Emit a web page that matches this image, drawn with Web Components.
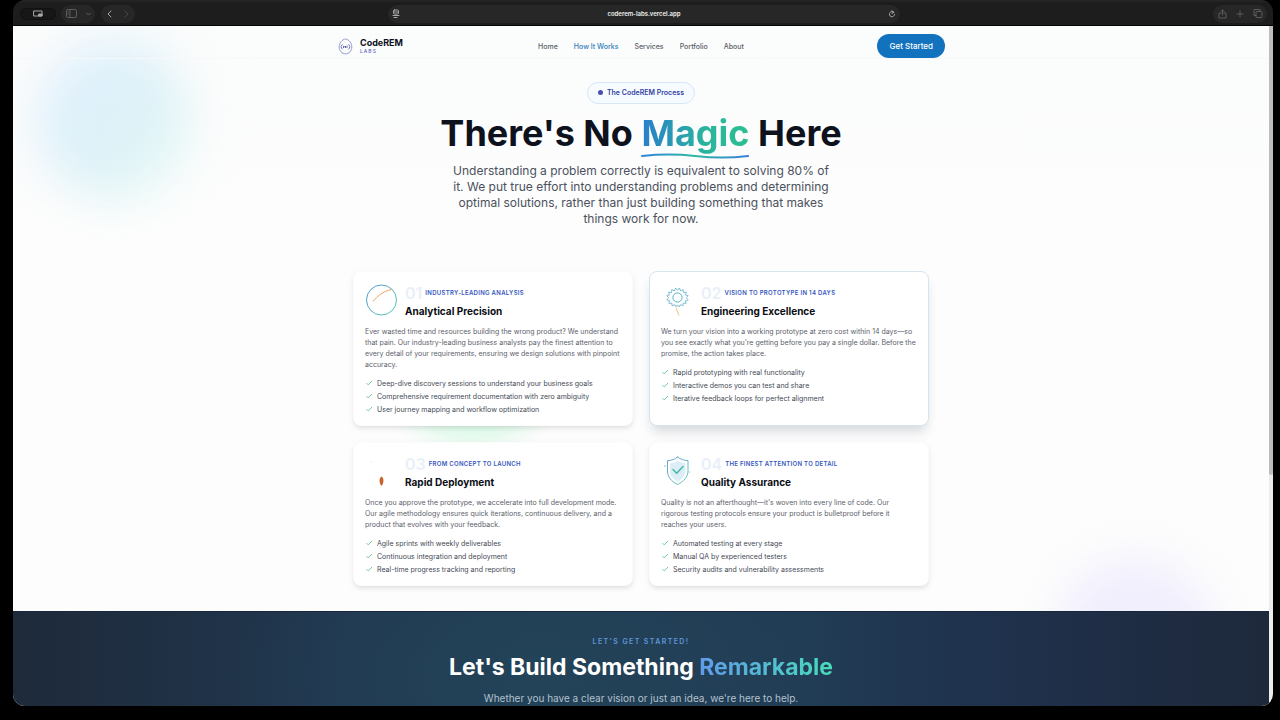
<!DOCTYPE html>
<html lang="en">
<head>
<meta charset="utf-8">
<meta name="viewport" content="width=device-width, initial-scale=1">
<title>CodeREM Labs – How It Works</title>
<style>
  html, body { height: 100%; }
  body { margin: 0; background: #000; font-family: Inter, "Liberation Sans", sans-serif; color: #0b0f1a; overflow: hidden; }
</style>
</head>
<body>
<browser-window address="coderem-labs.vercel.app">
  <site-header></site-header>
  <hero-section>
    <span slot="badge">The CodeREM Process</span>
    Understanding a problem correctly is equivalent to solving 80% of it. We put true effort into understanding problems and determining optimal solutions, rather than just building something that makes things work for now.
  </hero-section>
  <process-grid>
    <process-card number="01" tag="Industry-Leading Analysis" heading="Analytical Precision">
      <svg slot="icon" viewBox="0 0 32 32" width="32" height="32" fill="none" aria-hidden="true">
        <defs><linearGradient id="ring" x1="0" y1="0" x2="1" y2="1"><stop stop-color="#3f86cf"/><stop offset="1" stop-color="#3cc7a4"/></linearGradient></defs>
        <circle cx="16.500" cy="16" r="15" stroke="url(#ring)" stroke-width=".9"/>
        <path d="M8 17.500C12 12.500 17.500 7.500 26.500 5.500" stroke="#efa25f" stroke-width="1"/>
      </svg>
      Ever wasted time and resources building the wrong product? We understand that pain. Our industry-leading business analysts pay the finest attention to every detail of your requirements, ensuring we design solutions with pinpoint accuracy.
      <check-item slot="item">Deep-dive discovery sessions to understand your business goals</check-item>
      <check-item slot="item">Comprehensive requirement documentation with zero ambiguity</check-item>
      <check-item slot="item">User journey mapping and workflow optimization</check-item>
    </process-card>
    <process-card number="02" tag="Vision to Prototype in 14 Days" heading="Engineering Excellence" active>
      <svg slot="icon" viewBox="0 0 32 32" width="32" height="32" fill="none" stroke-linejoin="round" aria-hidden="true">
        <path d="M16.500 6.300L18.500 4l1 2.900 2.700-1.300.2 2.900 3-.3-.9 2.700 2.700.8-1.900 2 1.900 2.200-2.800.8.800 2.600-3-.1-.3 2.600-2.600-1.100-1.200 2.200-1.600-2-1.600 2-1.200-2.200-2.600 1.100-.3-2.600-3 .1.800-2.600-2.800-.8 1.900-2.200-1.900-2 2.700-.8-.9-2.700 3 .3.2-2.900 2.700 1.300 1-2.900z" stroke="#5cb0c8" stroke-width=".8"/>
        <circle cx="16.500" cy="13.500" r="4.600" stroke="#45aabc" stroke-width=".9"/>
        <path d="M15 24l3 7.500" stroke="#e6c67c" stroke-width="1"/>
      </svg>
      We turn your vision into a working prototype at zero cost within 14 days—so you see exactly what you're getting before you pay a single dollar. Before the promise, the action takes place.
      <check-item slot="item">Rapid prototyping with real functionality</check-item>
      <check-item slot="item">Interactive demos you can test and share</check-item>
      <check-item slot="item">Iterative feedback loops for perfect alignment</check-item>
    </process-card>
    <process-card number="03" tag="From Concept to Launch" heading="Rapid Deployment">
      <svg slot="icon" viewBox="0 0 32 32" width="32" height="32" aria-hidden="true">
        <path d="M16.500 21.500c2.600 1.600 2.600 6.500 0 9.500-2.600-3-2.600-7.900 0-9.500z" fill="#c9622b"/>
        <circle cx="6" cy="7" r=".5" fill="#c5d8e8"/>
      </svg>
      Once you approve the prototype, we accelerate into full development mode. Our agile methodology ensures quick iterations, continuous delivery, and a product that evolves with your feedback.
      <check-item slot="item">Agile sprints with weekly deliverables</check-item>
      <check-item slot="item">Continuous integration and deployment</check-item>
      <check-item slot="item">Real-time progress tracking and reporting</check-item>
    </process-card>
    <process-card number="04" tag="The Finest Attention to Detail" heading="Quality Assurance">
      <svg slot="icon" viewBox="0 0 32 32" width="32" height="32" fill="none" stroke-linecap="round" stroke-linejoin="round" aria-hidden="true">
        <defs><linearGradient id="sh" x1="0" y1="0" x2="1" y2="1"><stop stop-color="#5b93cf"/><stop offset="1" stop-color="#52c2a8"/></linearGradient></defs>
        <path d="M16.500 2c3 2.400 6.500 3.500 10.500 3.600V16c0 6-4.500 10.500-10.500 13.500C10.500 26.500 6.500 22 6.500 16V5.600c4-.1 7.500-1.200 10-3.600z" stroke="url(#sh)" stroke-width=".9"/>
        <path d="M16.700 5.500c2.400 1.800 5 2.600 7.800 2.700V16c0 4.500-3.300 8-7.800 10.500C12.200 24 9 20.500 9 16V8.200c2.800-.1 5.400-.9 7.700-2.700z" fill="#dcedf8"/>
        <path d="M12 14.500l3.700 3.700 6.300-6.700" stroke="#43b9a0" stroke-width="1.500"/>
        <circle cx="4" cy="11" r=".9" fill="#a9cfe4"/><circle cx="28.500" cy="17" r=".8" fill="#a4dccc"/>
      </svg>
      Quality is not an afterthought—it's woven into every line of code. Our rigorous testing protocols ensure your product is bulletproof before it reaches your users.
      <check-item slot="item">Automated testing at every stage</check-item>
      <check-item slot="item">Manual QA by experienced testers</check-item>
      <check-item slot="item">Security audits and vulnerability assessments</check-item>
    </process-card>
  </process-grid>
  <cta-section>
    <span slot="eyebrow">Let's get started!</span>
    Whether you have a clear vision or just an idea, we're here to help.
  </cta-section>
</browser-window>

<script>
const define = (name, html) => customElements.define(name, class extends HTMLElement {
  constructor() {
    super();
    const t = document.createElement('template');
    t.innerHTML = html;
    this.attachShadow({ mode: 'open' }).append(t.content.cloneNode(true));
  }
  connectedCallback() {
    this.shadowRoot.querySelectorAll('[data-attr]').forEach(n => {
      const v = this.getAttribute(n.dataset.attr) || '';
      if (n.localName === 'input') n.value = v; else n.textContent = v;
    });
  }
});

define('browser-window', `
<style>
  :host { display: block; height: 100vh; box-sizing: border-box; padding: 0 7px 14px 13px; }
  .frame { display: flex; flex-direction: column; height: 100%; border-radius: 12px; overflow: hidden; background: #1d1d1d; }
  .bar { display: grid; grid-template-columns: 1fr minmax(0, 512px) 1fr; align-items: center; height: 26px; flex: none; box-sizing: border-box; border-top: 2px solid #242424; border-bottom: 1px solid #050505; padding: 0 6px 0 8px; }
  .group { display: flex; gap: 6px; align-items: center; }
  .end { justify-content: flex-end; }
  .pill { display: flex; align-items: center; justify-content: space-around; height: 18px; width: 34px; border-radius: 9px; background: #272727; }
  .pill.dark { background: #171717; height: 10px; box-shadow: 0 0 0 1px #111; }
  .pill.wide { width: 54px; }
  button { display: grid; place-items: center; padding: 0; border: 0; background: none; color: #5c5c5c; }
  button.lit { color: #a8a8a8; }
  svg { display: block; fill: none; stroke: currentColor; stroke-linecap: round; stroke-linejoin: round; }
  .address { display: flex; align-items: center; height: 18px; padding: 0 4px; border-radius: 9px; background: #272727; }
  input { flex: 1; min-width: 0; border: 0; padding: 0; background: none; color: #f2f2f2; text-align: center; font: 600 6px/12px Inter, sans-serif; }
  .view { display: flex; flex: 1; min-height: 0; }
  .page { position: relative; flex: 1; min-width: 0; overflow: hidden; background: linear-gradient(#fbfcfc, #fdfdfd 30%); }
  .page::before, .page::after, .glow { content: ""; position: absolute; border-radius: 50%; }
  .page::before { left: 22px; top: 14px; width: 156px; height: 160px; background: linear-gradient(130deg, #e2f0ff, #ddf1f8 50%, #e6f9f4); filter: blur(22px); }
  .page::after { right: 54px; top: 532px; width: 160px; height: 160px; background: #f1eefd; filter: blur(20px); }
  .glow { left: 395px; top: 340px; width: 130px; height: 76px; background: #d9f9e6; filter: blur(12px); }
  .content { position: relative; z-index: 1; }
  .track { width: 4px; background: #ececec; }
  .thumb { height: 66%; background: #bdbdbd; border-radius: 0 0 2px 2px; }
</style>
<div class="frame">
  <div class="bar">
    <div class="group">
      <div class="pill dark"><button class="lit" aria-label="Windows"><svg width="10" height="8" viewBox="0 0 10 8"><path d="M1 1h8v5H1z"/><path d="M6 4h3v2H6z" fill="currentColor"/></svg></button></div>
      <div class="pill"><button aria-label="Sidebar"><svg width="11" height="9" viewBox="0 0 11 9"><rect x=".5" y=".5" width="10" height="8" rx="1.500"/><path d="M4 .5v8M2 3h.5M2 5h.5"/></svg></button><button aria-label="Tab groups"><svg width="5" height="4" viewBox="0 0 5 4"><path d="M.5 1l2 2 2-2"/></svg></button></div>
      <div class="pill"><button class="lit" aria-label="Back"><svg width="5" height="8" viewBox="0 0 5 8"><path d="M4 1L1 4l3 3"/></svg></button><button aria-label="Forward"><svg width="5" height="8" viewBox="0 0 5 8" opacity=".6"><path d="M1 1l3 3-3 3"/></svg></button></div>
    </div>
    <div class="address">
      <button class="lit" aria-label="Page menu"><svg width="8" height="9" viewBox="0 0 8 9"><rect x="1.500" y="1" width="5" height="4" rx="1"/><path d="M2 3h4M1 6.500h6M2 8.500h3"/></svg></button>
      <input type="text" readonly aria-label="Address" data-attr="address">
      <button class="lit" aria-label="Reload"><svg width="8" height="8" viewBox="0 0 8 8"><path d="M6 2.500A2.600 2.600 0 1 0 6.600 4.500M4 .8l2 1.600-2 1"/></svg></button>
    </div>
    <div class="group end">
      <div class="pill wide"><button aria-label="Share"><svg width="9" height="10" viewBox="0 0 9 10"><path d="M3 4H1v5h7V4H6M4.500 6V1M3 2.500L4.500 1 6 2.500"/></svg></button><button aria-label="New tab"><svg width="8" height="8" viewBox="0 0 8 8"><path d="M4 1v6M1 4h6"/></svg></button><button aria-label="Tabs"><svg width="10" height="9" viewBox="0 0 10 9"><rect x="3" y="2.500" width="6" height="6" rx="1"/><path d="M3 6.500H1v-6h6v2"/></svg></button></div>
    </div>
  </div>
  <div class="view">
    <div class="page"><div class="glow"></div><div class="content"><slot></slot></div></div>
    <div class="track"><div class="thumb"></div></div>
  </div>
</div>`);

define('site-header', `
<style>
  :host { display: block; padding: 8px 16px 0; border-bottom: 1px solid #f7f8f9; }
  header { display: grid; grid-template-columns: 1fr auto 1fr; align-items: center; max-width: 608px; margin: 0 auto; }
  a { text-decoration: none; }
  .brand { display: flex; align-items: center; gap: 6px; color: #0b0f1a; }
  .name { display: block; font-size: 9px; font-weight: 700; line-height: 10px; }
  .labs { display: block; font-size: 5px; font-weight: 500; line-height: 7px; letter-spacing: 1px; color: #5b63bd; }
  nav { display: flex; gap: 16px; padding-top: 2px; }
  nav a { font-size: 7px; font-weight: 500; line-height: 12px; color: #5a5f68; }
  nav a[aria-current] { color: #2f7cbd; }
  button { justify-self: end; height: 24px; padding: 0 12px; border: 0; border-radius: 12px; background: #1272bd; color: #fff; font: 500 8px/12px Inter, sans-serif; }
</style>
<header>
  <a class="brand" href="#home">
    <svg width="17" height="17" viewBox="0 0 17 17" fill="none" stroke="#7f84c4" stroke-width=".8" aria-hidden="true"><path d="M8.500 1C12 1.500 14.800 5 14.800 9c0 4-2.800 6.800-6.300 6.800S2.200 13 2.200 9C2.200 5 5 1.500 8.500 1z"/><path d="M5.500 6.500c-1.200 0-.5 2-1.700 2.300 1.200.3.500 2.300 1.700 2.300M11.500 6.500c1.200 0 .5 2 1.700 2.300-1.200.3-.5 2.300-1.700 2.300M6.500 10V8l1.200 1.200L8.500 8v2M10 7.500v2.500" stroke="#4a4f9c"/></svg>
    <span><span class="name">CodeREM</span><span class="labs">LABS</span></span>
  </a>
  <nav aria-label="Main"><a href="#home">Home</a><a href="#how" aria-current="page">How It Works</a><a href="#services">Services</a><a href="#portfolio">Portfolio</a><a href="#about">About</a></nav>
  <button>Get Started</button>
</header>`);

define('hero-section', `
<style>
  :host { display: block; padding: 20px 16px 0; text-align: center; }
  .badge { display: inline-flex; align-items: center; gap: 4px; height: 20px; padding: 0 10px; border: 1px solid #d9e6f7; border-radius: 11px; background: #f5fbfe; color: #3443a5; font-size: 7px; font-weight: 600; line-height: 12px; }
  .dot { width: 5px; height: 5px; border-radius: 50%; background: #4650ae; }
  h1 { margin: 6px 0 0; font-size: 36px; font-weight: 700; line-height: 46px; color: #0e121d; }
  .magic { position: relative; display: inline-block; }
  .ink { background: linear-gradient(90deg, #2a7dcb, #2ab59d 60%, #2bbf91); -webkit-background-clip: text; background-clip: text; color: transparent; }
  svg { position: absolute; left: 0; bottom: -3px; width: 100%; height: 6px; }
  p { max-width: 384px; margin: 7px auto 0; font-size: 12px; line-height: 16px; color: #4b515c; }
</style>
<div class="badge"><span class="dot"></span><slot name="badge"></slot></div>
<h1>There's No <span class="magic"><span class="ink">Magic</span><svg viewBox="0 0 108 6" preserveAspectRatio="none" fill="none" aria-hidden="true"><defs><linearGradient id="w"><stop stop-color="#3382dc"/><stop offset=".5" stop-color="#2fb8a2"/><stop offset="1" stop-color="#3a7fdc"/></linearGradient></defs><path d="M1 3C20 1 36 1 54 3s36 2 53 0" stroke="url(#w)" stroke-width="2" stroke-linecap="round"/></svg></span> Here</h1>
<p><slot></slot></p>`);

define('process-grid', `
<style>
  :host { display: grid; grid-template-columns: 1fr 1fr; gap: 16px; max-width: 576px; margin: 0 auto; padding: 44px 16px 25px; }
</style>
<slot></slot>`);

define('process-card', `
<style>
  :host { display: block; box-sizing: border-box; padding: 12px 11px 10px; border: 1px solid #fcfcfc; border-radius: 8px; background: #fff; box-shadow: 0 3px 5px -1px #00000018, 0 2px 10px #0000000a; }
  :host([active]) { border-color: #d5e5f0; box-shadow: 0 8px 12px -3px #1a28402e; }
  header { display: flex; gap: 8px; }
  .icon { display: block; width: 32px; height: 32px; }
  .meta { display: flex; align-items: center; gap: 3px; height: 18px; }
  .num { font-size: 16px; font-weight: 600; line-height: 18px; color: #e9eff8; }
  .tag { font-size: 6px; font-weight: 600; line-height: 8px; letter-spacing: .05em; text-transform: uppercase; color: #3557c0; }
  h2 { margin: 1px 0 0; font-size: 10px; font-weight: 700; line-height: 16px; color: #0a0d14; }
  p { margin: 7px 0 8px; font-size: 7px; line-height: 11px; color: #5c616b; }
  .list { display: grid; gap: 2px; }
</style>
<article>
  <header>
    <span class="icon"><slot name="icon"></slot></span>
    <div><div class="meta"><span class="num" data-attr="number"></span><span class="tag" data-attr="tag"></span></div><h2 data-attr="heading"></h2></div>
  </header>
  <p><slot></slot></p>
  <div class="list" role="list"><slot name="item"></slot></div>
</article>`);

define('check-item', `
<style>
  :host { display: flex; align-items: center; gap: 4px; font-size: 7px; line-height: 11px; color: #444954; }
  svg { display: block; width: 8px; height: 8px; }
</style>
<svg viewBox="0 0 8 8" fill="none" stroke="#5cc49d" stroke-width=".9" stroke-linecap="round" stroke-linejoin="round" aria-hidden="true"><path d="M1.800 4.400l1.500 1.500 3.400-3.600"/></svg>
<span role="listitem"><slot></slot></span>`);

define('cta-section', `
<style>
  :host { display: block; padding: 24px 16px 64px; text-align: center; border-top: 1px solid #17283c; background: radial-gradient(ellipse 320px 180px at 42% 40%, #23465acc 0, #23465a00 100%), linear-gradient(90deg, #1e2a3a, #213851 28%, #213c55 62%, #1f304b 80%, #1e293b); }
  .eyebrow { display: block; font-size: 7px; font-weight: 600; line-height: 12px; letter-spacing: .2em; text-transform: uppercase; color: #6095dc; }
  h2 { margin: 3px 0 0; font-size: 23px; font-weight: 700; line-height: 32px; color: #fff; }
  .ink { background: linear-gradient(90deg, #619bea, #48dcb9); -webkit-background-clip: text; background-clip: text; color: transparent; }
  p { margin: 7px 0 0; font-size: 10px; line-height: 16px; color: #b3c0cf; }
</style>
<section>
  <span class="eyebrow"><slot name="eyebrow"></slot></span>
  <h2>Let's Build Something <span class="ink">Remarkable</span></h2>
  <p><slot></slot></p>
</section>`);

</script>
</body>
</html>
